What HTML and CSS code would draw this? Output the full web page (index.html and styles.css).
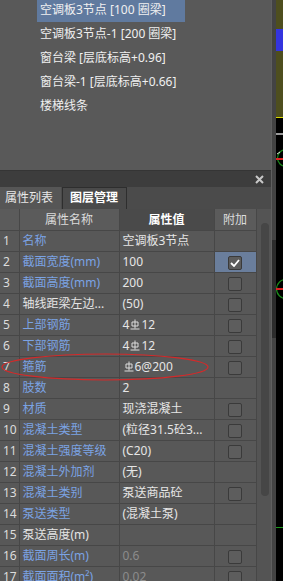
FILE: index.html
```html
<!DOCTYPE html>
<html>
<head>
  <title>构件属性</title>
  <meta name="viewport" content="width=device-width, initial-scale=1">
  <link rel="stylesheet" href="styles.css">
</head>
<body>
<div class="app">
  <div class="side">
    <div class="list-panel">
      <ul class="comp-list">
        <li class="sel">空调板3节点 [100 圈梁]</li>
        <li>空调板3节点-1 [200 圈梁]</li>
        <li>窗台梁 [层底标高+0.96]</li>
        <li>窗台梁-1 [层底标高+0.66]</li>
        <li>楼梯线条</li>
      </ul>
    </div>
    <div class="dock-title">
      <svg class="close" width="9" height="9" viewBox="0 0 9 9"><path d="M1 1L8 8M8 1L1 8" stroke="#c8c8c8" stroke-width="2"/></svg>
    </div>
    <div class="tabs">
      <span class="tab active">属性列表</span>
      <span class="tab">图层管理</span>
    </div>
    <div class="grid-wrap">
      <table class="props">
        <colgroup><col class="c-no"><col class="c-name"><col class="c-val"><col class="c-add"></colgroup>
        <tr class="head"><th></th><th>属性名称</th><th class="h-val">属性值</th><th>附加</th></tr>
        <tr><td class="no">1</td><td class="nm">名称</td><td class="v">空调板3节点</td><td></td></tr>
        <tr><td class="no">2</td><td class="nm">截面宽度(mm)</td><td class="v">100</td><td class="add on"><span class="cb checked"><svg width="10" height="8" viewBox="0 0 10 8"><path d="M1 4L4 7L9 1" fill="none" stroke="#fff" stroke-width="1.8"/></svg></span></td></tr>
        <tr><td class="no">3</td><td class="nm">截面高度(mm)</td><td class="v">200</td><td class="add"><span class="cb"></span></td></tr>
        <tr><td class="no">4</td><td class="nm plain">轴线距梁左边...</td><td class="v">(50)</td><td class="add"><span class="cb"></span></td></tr>
        <tr><td class="no">5</td><td class="nm">上部钢筋</td><td class="v">4<svg class="bar" width="10" height="11" viewBox="0 0 10 11"><path d="M5 0.5V9.5M0.5 10H9.5M2 3H8V7H2Z" fill="none" stroke="#dcdcdc" stroke-width="1"/></svg>12</td><td class="add"><span class="cb"></span></td></tr>
        <tr><td class="no">6</td><td class="nm">下部钢筋</td><td class="v">4<svg class="bar" width="10" height="11" viewBox="0 0 10 11"><path d="M5 0.5V9.5M0.5 10H9.5M2 3H8V7H2Z" fill="none" stroke="#dcdcdc" stroke-width="1"/></svg>12</td><td class="add"><span class="cb"></span></td></tr>
        <tr><td class="no">7</td><td class="nm">箍筋</td><td class="v"><svg class="bar" width="10" height="11" viewBox="0 0 10 11"><path d="M5 0.5V9.5M0.5 10H9.5M2 3H8V7H2Z" fill="none" stroke="#dcdcdc" stroke-width="1"/></svg>6@200</td><td class="add"><span class="cb"></span></td></tr>
        <tr><td class="no">8</td><td class="nm">肢数</td><td class="v">2</td><td></td></tr>
        <tr><td class="no">9</td><td class="nm">材质</td><td class="v">现浇混凝土</td><td class="add"><span class="cb"></span></td></tr>
        <tr><td class="no">10</td><td class="nm">混凝土类型</td><td class="v">(粒径31.5砼3...</td><td class="add"><span class="cb"></span></td></tr>
        <tr><td class="no">11</td><td class="nm">混凝土强度等级</td><td class="v">(C20)</td><td class="add"><span class="cb"></span></td></tr>
        <tr><td class="no">12</td><td class="nm">混凝土外加剂</td><td class="v">(无)</td><td></td></tr>
        <tr><td class="no">13</td><td class="nm">混凝土类别</td><td class="v">泵送商品砼</td><td class="add"><span class="cb"></span></td></tr>
        <tr><td class="no">14</td><td class="nm">泵送类型</td><td class="v">(混凝土泵)</td><td></td></tr>
        <tr><td class="no">15</td><td class="nm plain">泵送高度(m)</td><td class="v"></td><td></td></tr>
        <tr><td class="no">16</td><td class="nm">截面周长(m)</td><td class="v dim">0.6</td><td class="add"><span class="cb"></span></td></tr>
        <tr><td class="no">17</td><td class="nm">截面面积(m²)</td><td class="v dim">0.02</td><td class="add"><span class="cb"></span></td></tr>
      </table>
      <div class="vscroll"><div class="thumb"></div></div>
      <svg class="mark" width="214" height="32" viewBox="0 0 214 32"><ellipse cx="105" cy="16" rx="103" ry="13" fill="none" stroke="#d32a2a" stroke-width="1.2"/></svg>
    </div>
  </div>
  <div class="splitter"><div class="grip"></div></div>
  <svg class="canvas" width="7" height="581" viewBox="0 0 7 581">
    <rect x="0" y="0" width="7" height="117" fill="#4e4e1e"/>
    <rect x="0" y="29" width="7" height="22" fill="#3434de"/>
    <rect x="0" y="117" width="7" height="1" fill="#d8d800"/>
    <rect x="0" y="118" width="7" height="463" fill="#000"/>
    <rect x="0" y="133" width="7" height="2" fill="#9a9a9a"/>
    <circle cx="10" cy="158" r="8.5" fill="none" stroke="#1b8c1b" stroke-width="1.2"/>
    <path d="M1 154L4 152" stroke="#ddd" stroke-width="1"/>
    <rect x="0" y="158" width="7" height="2" fill="#d22"/>
    <circle cx="10" cy="289" r="9.5" fill="none" stroke="#1b8c1b" stroke-width="1.2"/>
    <rect x="0" y="288" width="7" height="2" fill="#d22"/>
    <rect x="0" y="527" width="7" height="1" fill="#1b9a1b"/>
  </svg>
</div>
</body>
</html>
```

FILE: styles.css
```css
body { margin:0; background:#000; overflow:hidden; font-family:"Noto Sans","Noto Sans CJK SC",sans-serif; font-size:12px; }
.app { display:flex; width:283px; height:581px; overflow:hidden; }
.side { width:271px; border-right:1px solid #5f5f5f; background:#555; display:flex; flex-direction:column; flex-shrink:0; }

.list-panel { height:170px; background:#595959; border-bottom:1px solid #353535; overflow:hidden; flex-shrink:0; }
.comp-list { list-style:none; margin:-2px 0 0 0; padding:0 0 0 37px; }
.comp-list li { width:145px; height:24px; line-height:24px; padding-left:3px; color:#f0f0f0; white-space:nowrap; }
.comp-list li.sel { background:#607a9f; }

.dock-title { height:16px; background:#3d3d3d; display:flex; justify-content:flex-end; align-items:center; padding-right:7px; flex-shrink:0; }

.tabs { height:22px; background:#4b4b4b; display:flex; flex-shrink:0; }
.tab { height:22px; line-height:22px; padding:0 8px 0 5px; color:#e8e8e8; box-sizing:border-box; }
.tab.active { background:#565656; width:61px; }
.tab:not(.active) { width:65px; margin-left:1px; border:1px solid #2e2e2e; border-bottom:none; background:#4a4a4a; color:#fff; font-weight:bold; padding-left:7px; line-height:20px; }

.grid-wrap { position:relative; display:flex; flex:1; overflow:hidden; }
.props { border-collapse:collapse; table-layout:fixed; width:256px; flex-shrink:0; align-self:flex-start; }
.c-no { width:19px; } .c-name { width:100px; } .c-val { width:95px; } .c-add { width:42px; }
.props th, .props td { height:20px; padding:0; border:1px solid #474747; background:#585858; white-space:nowrap; overflow:hidden; text-overflow:clip; line-height:20px; }
.props tr > :first-child { border-left:none; }
.props tr.head th { height:21px; border-top:none; background:#5b5b5b; color:#dcdcdc; font-weight:normal; text-align:center; }
.props tr.head th.h-val { background:#4a4a4a; color:#fff; font-weight:bold; }
.no { color:#dcdcdc; padding-left:3px !important; }
.nm { color:#7ba3e4; padding-left:3px !important; }
.nm.plain { color:#e4e4e4; }
.v { color:#e6e6e6; padding-left:3px !important; }
.v.dim { color:#8c8c8c; }
.bar { vertical-align:-1px; margin:0 1px; }
.add { text-align:center; }
.add.on { background:#6a7e9c !important; }
.cb { display:inline-flex; align-items:center; justify-content:center; width:12px; height:12px; border:1px solid #3a3a3a; border-radius:2px; background:#5d5d5d; vertical-align:middle; }
.cb.checked { background:#5c5c5c; }

.vscroll { width:15px; background:#545454; flex-shrink:0; }
.thumb { width:8px; height:273px; margin:14px 0 0 4px; border-radius:4px; background:#464646; }

.mark { position:absolute; left:0; top:142px; }

.splitter { width:4px; background:#434343; flex-shrink:0; }
.grip { height:98px; margin-top:240px; background:#2c2c2c; }
.canvas { display:block; flex-shrink:0; }
```
